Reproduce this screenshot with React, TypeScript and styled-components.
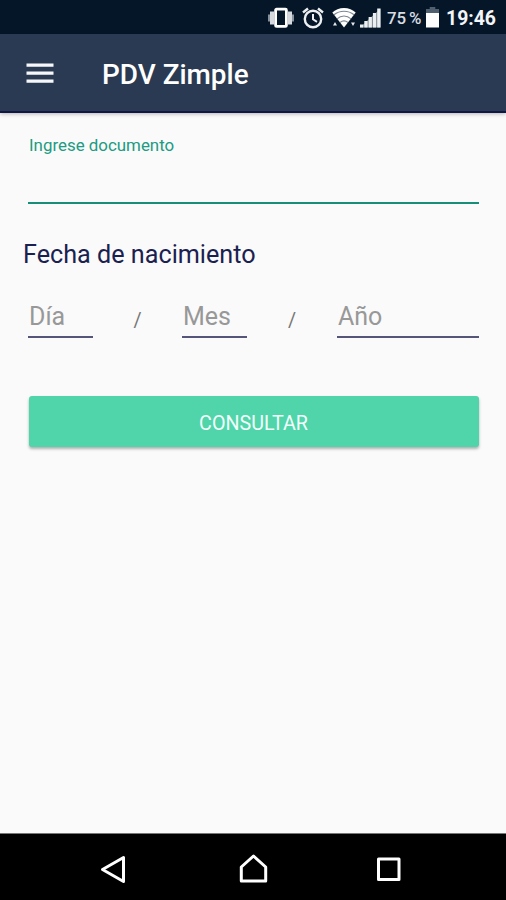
import React from "react";
import styled, { createGlobalStyle } from "styled-components";

const GlobalStyle = createGlobalStyle`
  * { box-sizing: border-box; }
  body { margin: 0; font-family: Roboto, sans-serif; background: #fafafa; }
`;

const Screen = styled.div`
  width: 506px;
  height: 900px;
  display: flex;
  flex-direction: column;
  overflow: hidden;
  background: #fafafa;
`;

const StatusBar = styled.div`
  height: 34px;
  flex: none;
  display: flex;
  justify-content: flex-end;
  align-items: center;
  padding: 2px 11px 0 0;
  background: #051629;
  color: #f3f5f7;
`;

const StatusIcon = styled.svg<{ $gap: number }>`
  height: 22px;
  flex: none;
  display: block;
  margin-right: ${(p) => p.$gap}px;
`;

const BatteryText = styled.span`
  width: 35px;
  margin-right: 4px;
  font-size: 16.9px;
  font-weight: 500;
  line-height: 22px;
  word-spacing: -1.4px;
  white-space: nowrap;
  color: #d9dde1;
`;

const Clock = styled.span`
  width: 49px;
  font-size: 19.4px;
  font-weight: 700;
  line-height: 24px;
  padding-top: 1px;
`;

const AppBar = styled.header`
  height: 79px;
  flex: none;
  display: flex;
  align-items: center;
  padding: 1px 26px 0;
  background: #293a52;
  border-bottom: 2px solid #111744;
  box-shadow: 0 1px 4px rgba(0, 0, 0, 0.28);
`;

const MenuButton = styled.button`
  width: 28px;
  height: 22px;
  padding: 0;
  border: 0;
  background: none;
`;

const Title = styled.h1`
  margin: 3px 0 0 48px;
  font-size: 27.9px;
  font-weight: 500;
  line-height: 34px;
  color: #ffffff;
`;

const Content = styled.main`
  flex: 1;
  padding: 22px 27px 0 28px;
`;

const DocumentField = styled.label`
  display: block;
  height: 69px;
  padding-left: 1px;
  border-bottom: 2px solid #168e78;
  font-size: 16.9px;
  line-height: 21px;
  color: #219b82;
`;

const DocumentWrap = styled.div`
  padding-bottom: 35px;
`;

const SectionTitle = styled.h2`
  margin: 0 0 0 -5px;
  font-size: 25.2px;
  font-weight: 400;
  line-height: 32px;
  color: #1a2150;
`;

const DateRow = styled.div`
  display: grid;
  grid-template-columns: 65px 89px 65px 90px 142px;
  grid-template-rows: 42px;
  height: 42px;
  margin-top: 26px;
`;

const DatePart = styled.div`
  height: 41px;
  padding-left: 1px;
  border-bottom: 2px solid #55557a;
  font-size: 25px;
  line-height: 40px;
  color: #989898;
`;

const Slash = styled.span`
  text-align: center;
  font-size: 19.7px;
  line-height: 48px;
  color: #777777;
`;

const SubmitButton = styled.button`
  display: block;
  width: 450px;
  height: 51px;
  margin: 57px 0 0 0.5px;
  padding: 3px 0 0;
  border: 0;
  border-radius: 3px;
  background: #50d4aa;
  box-shadow: 0 2px 3px rgba(0, 0, 0, 0.3);
  font-family: inherit;
  font-size: 19.7px;
  font-weight: 400;
  color: #f2fffa;
`;

const NavBar = styled.nav`
  height: 67px;
  flex: none;
  display: grid;
  grid-template-columns: 140px 135px 30px;
  align-items: center;
  padding: 4px 0 0 99px;
  background: #000000;
  border-top: 1px solid #777777;
`;

const NavIcon = styled.svg`
  width: 30px;
  height: 32px;
  fill: none;
  stroke: #ffffff;
  stroke-width: 3;
  stroke-linejoin: round;
`;

function StatusIcons() {
  return (
    <>
      <StatusIcon $gap={8} width="26" viewBox="0 0 26 22">
        <path d="M1 7.500v7M25 7.500v7" stroke="#87919c" strokeWidth="2" />
        <path d="M4 4.500v13M22 4.500v13" stroke="#d5d9dd" strokeWidth="4" />
        <rect x="7.600" y="2.200" width="10.800" height="17.200" rx="1" fill="#051629" stroke="#fff" strokeWidth="2.800" />
      </StatusIcon>
      <StatusIcon $gap={8} width="22" viewBox="0 0 22 22" fill="none" stroke="#edf0f2">
        <circle cx="11" cy="12" r="8.200" strokeWidth="2.400" />
        <path d="M1 5.500l5-4M21 5.500l-5-4" strokeWidth="2.400" />
        <path d="M11 7v5.300l4 2.500" strokeWidth="2" />
      </StatusIcon>
      <StatusIcon $gap={4} width="24" viewBox="0 0 24 22">
        <path d="M12 1C7.300 1 3.200 2.800.3 5.600L12 20.500 23.700 5.600C20.800 2.800 16.700 1 12 1z" fill="#fff" />
        <path d="M2 7.700c5.800-4.700 14.200-4.700 20 0M5 11.800c4.200-3.700 9.800-3.700 14 0M8 15.500c2.500-2 5.500-2 8 0" fill="none" stroke="#7b8691" strokeWidth="1.100" />
        <path d="M1 18.500l2-3.500 2 3.500zM19 15.500h4l-2 3.500z" fill="#e4e7ea" />
      </StatusIcon>
      <StatusIcon $gap={6} width="21" viewBox="0 0 21 22">
        <path d="M0 20.500L20.500 1.500v19z" fill="#7b8691" />
        <path d="M0 17.500h3.300v3H0zM4.300 14h3.300v6.500H4.300zM8.600 10h3.300v10.500H8.600zM12.900 6h3.300v14.500h-3.300zM17.200 1.500h3.300v19h-3.300z" fill="#eceff1" />
      </StatusIcon>
      <BatteryText>75 %</BatteryText>
      <StatusIcon $gap={7} width="13" viewBox="0 0 14 22" preserveAspectRatio="none">
        <path d="M4 0h6v2h4v5H0V2h4z" fill="#51606e" />
        <path d="M0 6h14v14.500H0z" fill="#fff" />
      </StatusIcon>
    </>
  );
}

export default function App() {
  return (
    <>
      <GlobalStyle />
      <Screen>
        <StatusBar>
          <StatusIcons />
          <Clock>19:46</Clock>
        </StatusBar>
        <AppBar>
          <MenuButton aria-label="Menu">
            <svg width="28" height="22" viewBox="0 0 28 22" display="block">
              <path d="M.5 3.200h27M.5 11.200h27M.5 19.200h27" stroke="#f7f7fa" strokeWidth="3.200" />
            </svg>
          </MenuButton>
          <Title>PDV Zimple</Title>
        </AppBar>
        <Content>
          <DocumentWrap>
            <DocumentField>Ingrese documento</DocumentField>
          </DocumentWrap>
          <SectionTitle>Fecha de nacimiento</SectionTitle>
          <DateRow>
            <DatePart>Día</DatePart>
            <Slash>/</Slash>
            <DatePart>Mes</DatePart>
            <Slash>/</Slash>
            <DatePart>Año</DatePart>
          </DateRow>
          <SubmitButton>CONSULTAR</SubmitButton>
        </Content>
        <NavBar>
          <NavIcon viewBox="0 0 30 32">
            <path d="M24.500 4.500v24L3.500 16.500z" />
          </NavIcon>
          <NavIcon viewBox="0 0 30 32">
            <path d="M2.300 28V14L14.500 3l12.200 11v14z" />
          </NavIcon>
          <NavIcon viewBox="0 0 30 32">
            <rect x="4.500" y="6" width="20.500" height="20.500" />
          </NavIcon>
        </NavBar>
      </Screen>
    </>
  );
}
